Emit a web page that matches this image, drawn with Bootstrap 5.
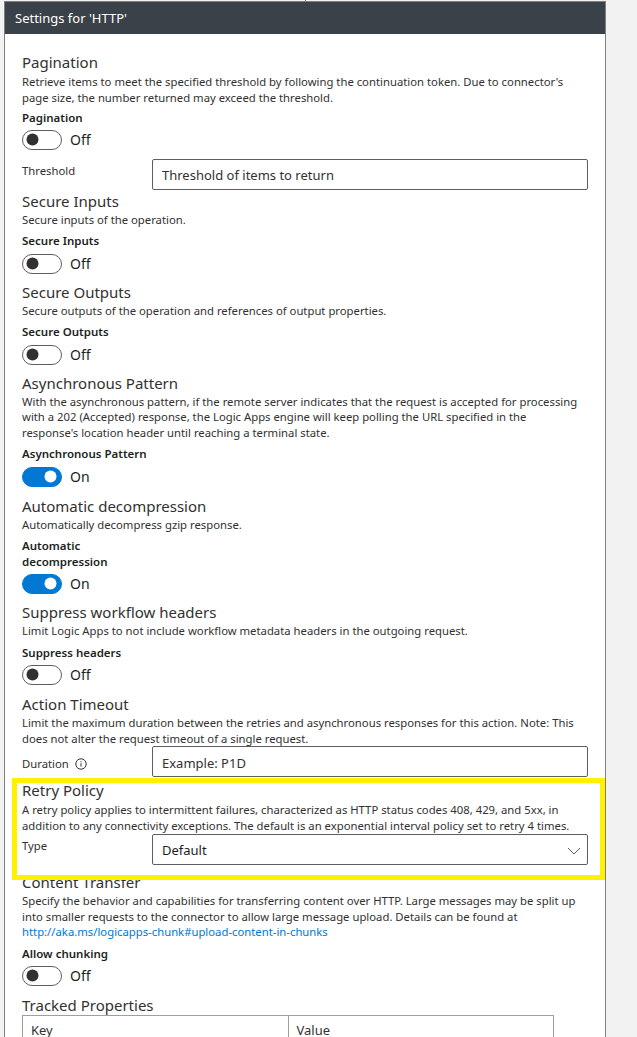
<!DOCTYPE html>
<html lang="en">
<head>
  <meta charset="UTF-8" />
  <title>Settings for 'HTTP'</title>
  <link href="https://cdn.jsdelivr.net/npm/bootstrap@5.3.0/dist/css/bootstrap.min.css" rel="stylesheet">
  <style>
    html, body { height: 1037px; overflow: hidden; }
    body { background: #f2f2f2; font-family: "Noto Sans", "Open Sans", sans-serif; font-size: 11.3px; line-height: 15.5px; color: #323130; }
    .page-strip { position: relative; width: 606px; padding: 1px 0 0 4px; }
    .top-tick { position: absolute; left: 305px; top: 0; width: 1px; height: 1px; background: #7f7f7f; }
    .settings-panel { width: 602px; height: 1100px; background: #fff; border: 1px solid #7f7f7f; border-bottom: 0; }
    .panel-title { height: 32px; background: #3b4148; color: #fff; font-size: 13px; line-height: 32px; padding-left: 10px; }
    .panel-body-wrap { padding: 18px 17px 0 17px; }
    .sect { margin-bottom: 8.5px; }
    .sect-tight { margin-bottom: 3px; }
    .sect-first { margin-bottom: 1px; }
    .sect-plus { margin-bottom: 9.5px; }
    .sect-title { font-size: 15px; line-height: 20px; font-weight: 400; margin: 0 0 1px; }
    .sect-title-low { margin-bottom: 2px; }
    .sect-desc { margin: 0; }
    .field-label { font-size: 11.5px; font-weight: 600; color: #201f1e; margin: 6px 0 5.5px; }
    .sect-first .field-label { margin: 5px 0; }
    .toggle-row { height: 19px; display: flex; align-items: center; gap: 8px; font-size: 14px; color: #201f1e; }
    .toggle-row .form-check-input { width: 40px; height: 20px; margin: 0; float: none; border: 1px solid #605e5c; border-radius: 10px; box-shadow: none; background-color: #fff; background-size: 20px 20px; background-position: left center; background-image: url("data:image/svg+xml,%3csvg xmlns='http://www.w3.org/2000/svg' viewBox='0 0 20 20'%3e%3ccircle cx='9.5' cy='9.5' r='6' fill='%23323130'/%3e%3c/svg%3e"); }
    .toggle-row .form-check-input:checked { background-color: #0078d4; border-color: #0078d4; background-position: right center; background-image: url("data:image/svg+xml,%3csvg xmlns='http://www.w3.org/2000/svg' viewBox='0 0 20 20'%3e%3ccircle cx='9.5' cy='9.5' r='6' fill='%23fff'/%3e%3c/svg%3e"); }
    .input-row { display: flex; align-items: flex-start; }
    .threshold-row { margin-top: 9px; }
    .type-row { margin-top: 1px; }
    .input-label { width: 130px; flex: none; padding-top: 4px; display: flex; align-items: center; gap: 6px; }
    .duration-label { padding-top: 10px; }
    .panel-input { flex: 1; width: 436px; height: 31px; border-radius: 2px; border: 1px solid #605e5c; font-size: 13px; padding: 2px 9px 0; color: #323130; background-color: #fff; line-height: 27px; }
    .panel-input::placeholder { color: #323130; opacity: 1; }
    .panel-select { color: #201f1e; display: flex; align-items: center; justify-content: space-between; padding-right: 6px; }
    .info-glyph { width: 12px; height: 12px; }
    .retry-wrap { position: relative; margin-bottom: 7px; }
    .retry-frame { position: absolute; left: -10px; right: -17px; top: -2px; height: 102px; border: 5px solid #fff200; pointer-events: none; z-index: 2; }
    .panel-link { color: #0078d4; text-decoration: none; }
    .props-table { width: 532px; margin: 0; }
    .props-table th { font-weight: 400; font-size: 13px; width: 50%; padding: 7px 8px; color: #323130; border: 1px solid #a19f9d; }
  </style>
</head>
<body>
  <div class="page-strip">
    <div class="top-tick"></div>
    <div class="settings-panel">
      <div class="panel-title">Settings for 'HTTP'</div>
      <div class="panel-body-wrap">

        <!-- Pagination -->
        <div class="sect sect-first">
          <h2 class="sect-title sect-title-low">Pagination</h2>
          <p class="sect-desc">Retrieve items to meet the specified threshold by following the continuation token. Due to connector's page size, the number returned may exceed the threshold.</p>
          <div class="field-label">Pagination</div>
          <div class="toggle-row"><input class="form-check-input" type="checkbox" role="switch"><span>Off</span></div>
          <div class="input-row threshold-row">
            <label class="input-label">Threshold</label>
            <input class="form-control panel-input" type="text" placeholder="Threshold of items to return">
          </div>
        </div>

        <div class="sect">
          <h2 class="sect-title">Secure Inputs</h2>
          <p class="sect-desc">Secure inputs of the operation.</p>
          <div class="field-label">Secure Inputs</div>
          <div class="toggle-row"><input class="form-check-input" type="checkbox" role="switch"><span>Off</span></div>
        </div>

        <div class="sect">
          <h2 class="sect-title">Secure Outputs</h2>
          <p class="sect-desc">Secure outputs of the operation and references of output properties.</p>
          <div class="field-label">Secure Outputs</div>
          <div class="toggle-row"><input class="form-check-input" type="checkbox" role="switch"><span>Off</span></div>
        </div>

        <div class="sect sect-plus">
          <h2 class="sect-title">Asynchronous Pattern</h2>
          <p class="sect-desc">With the asynchronous pattern, if the remote server indicates that the request is accepted for processing with a 202 (Accepted) response, the Logic Apps engine will keep polling the URL specified in the<br>response's location header until reaching a terminal state.</p>
          <div class="field-label">Asynchronous Pattern</div>
          <div class="toggle-row"><input class="form-check-input" type="checkbox" role="switch" checked><span>On</span></div>
        </div>

        <div class="sect">
          <h2 class="sect-title">Automatic decompression</h2>
          <p class="sect-desc">Automatically decompress gzip response.</p>
          <div class="field-label">Automatic<br>decompression</div>
          <div class="toggle-row"><input class="form-check-input" type="checkbox" role="switch" checked><span>On</span></div>
        </div>

        <div class="sect sect-plus">
          <h2 class="sect-title">Suppress workflow headers</h2>
          <p class="sect-desc">Limit Logic Apps to not include workflow metadata headers in the outgoing request.</p>
          <div class="field-label">Suppress headers</div>
          <div class="toggle-row"><input class="form-check-input" type="checkbox" role="switch"><span>Off</span></div>
        </div>

        <div class="sect sect-tight">
          <h2 class="sect-title">Action Timeout</h2>
          <p class="sect-desc">Limit the maximum duration between the retries and asynchronous responses for this action. Note: This does not alter the request timeout of a single request.</p>
          <div class="input-row">
            <label class="input-label duration-label">Duration
              <svg class="info-glyph" viewBox="0 0 12 12" fill="none" stroke="#323130"><circle cx="6" cy="6" r="5.2"/><path d="M6 5.2v3.4M6 3.2v1"/></svg>
            </label>
            <input class="form-control panel-input" type="text" placeholder="Example: P1D">
          </div>
        </div>

        <div class="sect retry-wrap">
          <h2 class="sect-title sect-title-low">Retry Policy</h2>
          <p class="sect-desc">A retry policy applies to intermittent failures, characterized as HTTP status codes 408, 429, and 5xx, in addition to any connectivity exceptions. The default is an exponential interval policy set to retry 4 times.</p>
          <div class="input-row type-row">
            <label class="input-label">Type</label>
            <div class="panel-input panel-select">Default
              <svg width="14" height="8" viewBox="0 0 14 8" fill="none" stroke="#605e5c"><path d="M1 1l6 6 6-6"/></svg>
            </div>
          </div>
          <div class="retry-frame"></div>
        </div>

        <div class="sect sect-plus">
          <h2 class="sect-title">Content Transfer</h2>
          <p class="sect-desc">Specify the behavior and capabilities for transferring content over HTTP. Large messages may be split up into smaller requests to the connector to allow large message upload. Details can be found at <a class="panel-link" href="#">http://aka.ms/logicapps-chunk#upload-content-in-chunks</a></p>
          <div class="field-label">Allow chunking</div>
          <div class="toggle-row"><input class="form-check-input" type="checkbox" role="switch"><span>Off</span></div>
        </div>

        <div class="sect">
          <h2 class="sect-title mb-0">Tracked Properties</h2>
          <table class="table props-table">
            <thead><tr><th>Key</th><th>Value</th></tr></thead>
          </table>
        </div>

      </div>
    </div>
  </div>
  <script src="https://cdn.jsdelivr.net/npm/bootstrap@5.3.0/dist/js/bootstrap.bundle.min.js"></script>
</body>
</html>
